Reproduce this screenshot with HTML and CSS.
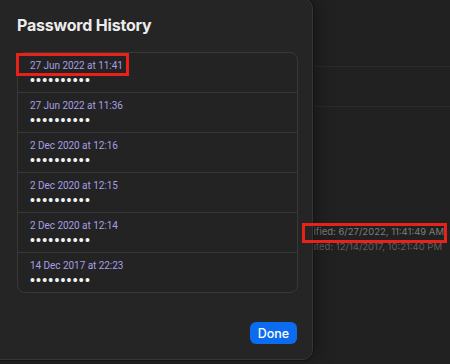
FILE: index.html
```html
<!DOCTYPE html>
<html>
<head>
<meta charset="utf-8">
<link rel="stylesheet" href="styles.css">
</head>
<body>
<div class="page">
  <div class="bg-head"></div>
  <div class="bg-row"></div>
  <div class="bg-info">
    <div class="info-line first">Last modified: 6/27/2022, 11:41:49 AM</div>
    <div class="info-line">Created: 12/14/2017, 10:21:40 PM</div>
  </div>
  <div class="bg-foot"></div>
</div>

<div class="dialog">
  <h1 class="title">Password History</h1>
  <div class="history">
    <div class="entry"><div class="date">27 Jun 2022 at 11:41</div><div class="dots">••••••••••</div></div>
    <div class="entry"><div class="date">27 Jun 2022 at 11:36</div><div class="dots">••••••••••</div></div>
    <div class="entry"><div class="date">2 Dec 2020 at 12:16</div><div class="dots">••••••••••</div></div>
    <div class="entry"><div class="date">2 Dec 2020 at 12:15</div><div class="dots">••••••••••</div></div>
    <div class="entry"><div class="date">2 Dec 2020 at 12:14</div><div class="dots">••••••••••</div></div>
    <div class="entry"><div class="date">14 Dec 2017 at 22:23</div><div class="dots">••••••••••</div></div>
  </div>
  <div class="footer"><button class="done">Done</button></div>
</div>

<div class="mark mark-date"></div>
<div class="mark mark-info"></div>
</body>
</html>
```

FILE: styles.css
```css
html, body {
  margin: 0;
  padding: 0;
  width: 450px;
  height: 364px;
  overflow: hidden;
  background: #212121;
  font-family: Inter, "Liberation Sans", sans-serif;
}

.page {
  display: flex;
  flex-direction: column;
  height: 364px;
}

.bg-head {
  height: 66px;
  border-bottom: 1px solid #2b2b2b;
  flex: none;
}

.bg-row {
  height: 39px;
  border-bottom: 1px solid #2b2b2b;
  flex: none;
}

.bg-info {
  margin-top: 119px;
  padding-right: 8px;
  display: flex;
  flex-direction: column;
  align-items: flex-end;
  gap: 3px;
  flex: none;
}

.info-line {
  font-size: 9.5px;
  line-height: 12px;
  color: #5f5f5f;
  white-space: nowrap;
}

.info-line.first {
  color: #7d7d7d;
  margin-right: -2px;
}

.bg-foot {
  flex: 1;
}

.dialog {
  position: absolute;
  left: -12px;
  top: -2px;
  width: 325px;
  height: 362px;
  box-sizing: border-box;
  padding: 16px 15px 15px 28px;
  background: #252525;
  border: 1px solid #353535;
  border-radius: 10px;
  box-shadow: 0 0 0 1px #141414, 4px 0 18px rgba(0, 0, 0, 0.35);
  display: flex;
  flex-direction: column;
}

.title {
  margin: 0;
  font-size: 16px;
  line-height: 21px;
  font-weight: 700;
  color: #ececec;
  letter-spacing: -0.2px;
}

.history {
  margin-top: 16px;
  width: 281px;
  box-sizing: border-box;
  border: 1px solid #383838;
  border-radius: 8px;
  background: #232323;
  display: flex;
  flex-direction: column;
}

.entry {
  height: 40px;
  box-sizing: border-box;
  padding: 6px 0 0 12px;
  border-bottom: 1px solid #363636;
}

.entry:last-child {
  border-bottom: none;
  height: 39px;
}

.date {
  font-family: Roboto, Inter, sans-serif;
  font-size: 10px;
  line-height: 13px;
  color: #a79fe4;
  font-weight: 400;
  letter-spacing: -0.05px;
}

.dots {
  margin-top: 1px;
  font-family: "Liberation Sans", sans-serif;
  font-size: 14px;
  line-height: 14px;
  letter-spacing: 1.2px;
  color: #f2f2f2;
}

.footer {
  margin-top: auto;
  display: flex;
  justify-content: flex-end;
}

.done {
  width: 47px;
  height: 22px;
  border: none;
  border-radius: 6px;
  background: #0b6cf0;
  color: #ffffff;
  font-family: Inter, "Liberation Sans", sans-serif;
  font-size: 12.5px;
  font-weight: 500;
  padding: 0;
}

.mark {
  position: absolute;
  border: 3px solid #e8221b;
  box-sizing: border-box;
}

.mark-date {
  left: 16px;
  top: 53px;
  width: 113px;
  height: 23px;
}

.mark-info {
  left: 302px;
  top: 223px;
  width: 145px;
  height: 20px;
}
```
